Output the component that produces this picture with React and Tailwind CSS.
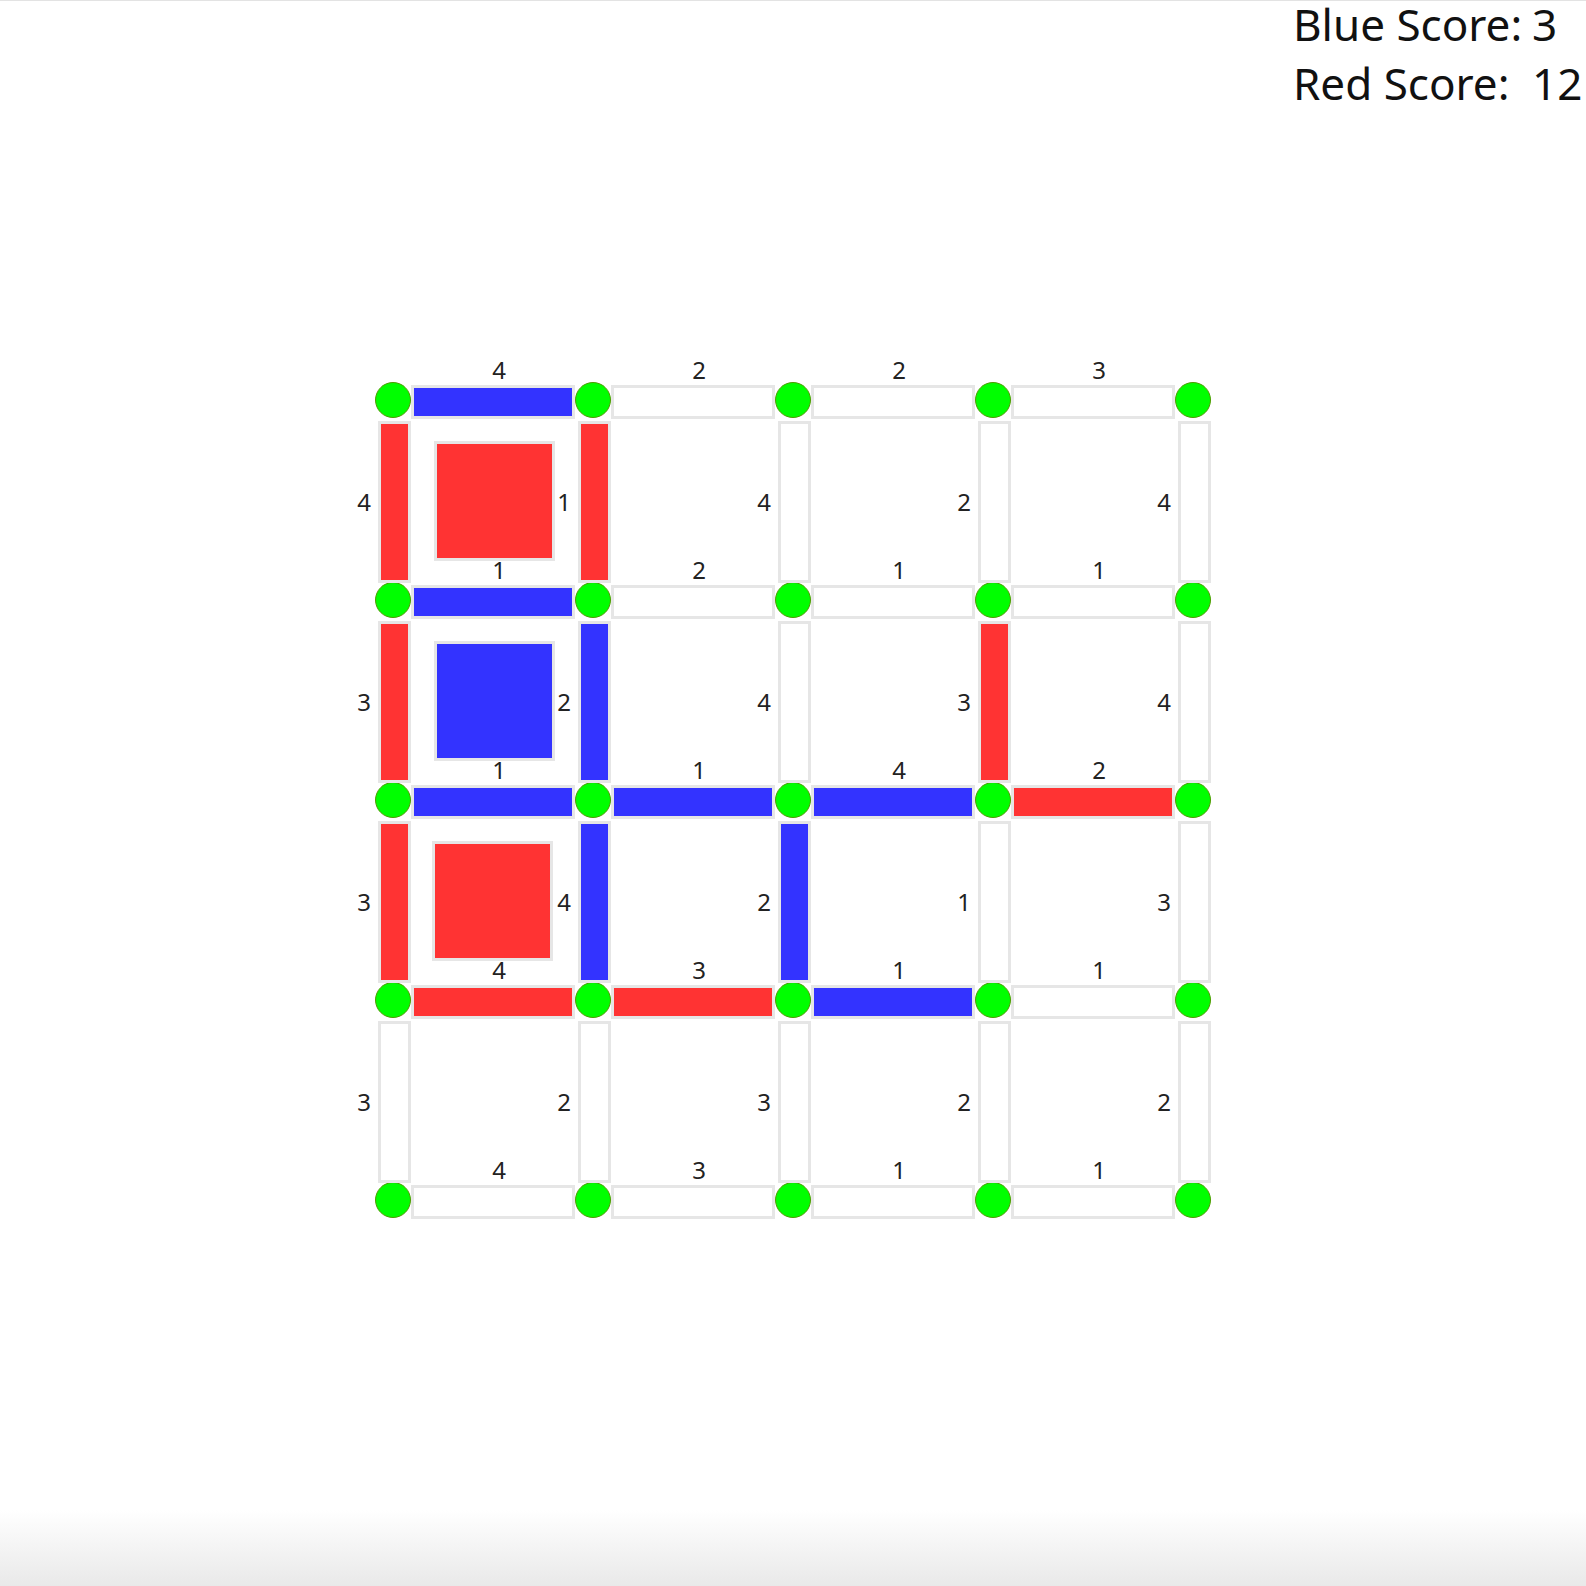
import React from 'react'

const hLabels = [[4, 2, 2, 3], [1, 2, 1, 1], [1, 1, 4, 2], [4, 3, 1, 1], [4, 3, 1, 1]]
const hOwner = [['b', 0, 0, 0], ['b', 0, 0, 0], ['b', 'b', 'b', 'r'], ['r', 'r', 'b', 0], [0, 0, 0, 0]]
const vLabels = [[4, 1, 4, 2, 4], [3, 2, 4, 3, 4], [3, 4, 2, 1, 3], [3, 2, 3, 2, 2]]
const vOwner = [['r', 'r', 0, 0, 0], ['r', 'b', 0, 'r', 0], ['r', 'b', 'b', 0, 0], [0, 0, 0, 0, 0]]
const boxes = { '0-0': 'r', '1-0': 'b', '2-0': 'r' }

const fill = { r: 'bg-[#ff3333]', b: 'bg-[#3333ff]', 0: 'bg-white' }

function Dot() {
  return <div className="w-[36px] h-[36px] shrink-0 rounded-full bg-[#00ff00] border border-[#4f9a00]" />
}

function HEdge({ label, owner }) {
  return (
    <div className="w-[164px] h-[36px] shrink-0 flex">
      <div className={"relative mt-[3px] h-[34px] w-[165px] border-[3px] border-[#e6e6e6] " + fill[owner]}>
        <span className="absolute bottom-full left-0 right-0 mb-[6px] pl-[12px] text-center text-[24px] leading-none text-[#222]">{label}</span>
      </div>
    </div>
  )
}

function VEdge({ label, owner }) {
  return (
    <div className="w-[36px] h-[164px] shrink-0 flex">
      <div className={"relative ml-[3px] mt-[3px] w-[33px] h-[162px] border-[3px] border-[#e6e6e6] " + fill[owner]}>
        <span className="absolute right-full top-1/2 -translate-y-1/2 mr-[10px] text-[24px] leading-none text-[#222]">{label}</span>
      </div>
    </div>
  )
}

function Cell({ owner, shift }) {
  return (
    <div className="w-[164px] h-[164px] shrink-0 flex">
      {owner && (
        <div className={"mt-[23px] w-[121px] h-[120px] border-[3px] border-[#e6e6e6] " + (shift ? "ml-[21px] " : "ml-[23px] ") + fill[owner]} />
      )}
    </div>
  )
}

function Board() {
  const rows = []
  for (let r = 0; r < 5; r++) {
    rows.push(
      <div key={'d' + r} className="flex">
        {hLabels[r].map((l, c) => (
          <React.Fragment key={c}>
            <Dot />
            <HEdge label={l} owner={hOwner[r][c]} />
          </React.Fragment>
        ))}
        <Dot />
      </div>
    )
    if (r < 4) {
      rows.push(
        <div key={'e' + r} className="flex">
          {vLabels[r].map((l, c) => (
            <React.Fragment key={c}>
              <VEdge label={l} owner={vOwner[r][c]} />
              {c < 4 && <Cell owner={boxes[r + '-' + c]} shift={r === 2} />}
            </React.Fragment>
          ))}
        </div>
      )
    }
  }
  return <div className="flex flex-col">{rows}</div>
}

export default function App() {
  return (
    <div className="h-[1586px] bg-white border-t border-[#e3e3e3] flex flex-col font-['Noto_Sans',sans-serif]">
      <div className="ml-auto w-[293px] grid grid-cols-[239px_auto] gap-y-[13px] text-[44px] leading-[46px] text-[#111]">
        <div>Blue Score:</div>
        <div>3</div>
        <div>Red Score:</div>
        <div>12</div>
      </div>
      <div className="mt-[276px] flex justify-center">
        <Board />
      </div>
      <div className="mt-auto h-[76px] bg-linear-to-b from-white to-[#e9e9e9]" />
    </div>
  )
}
